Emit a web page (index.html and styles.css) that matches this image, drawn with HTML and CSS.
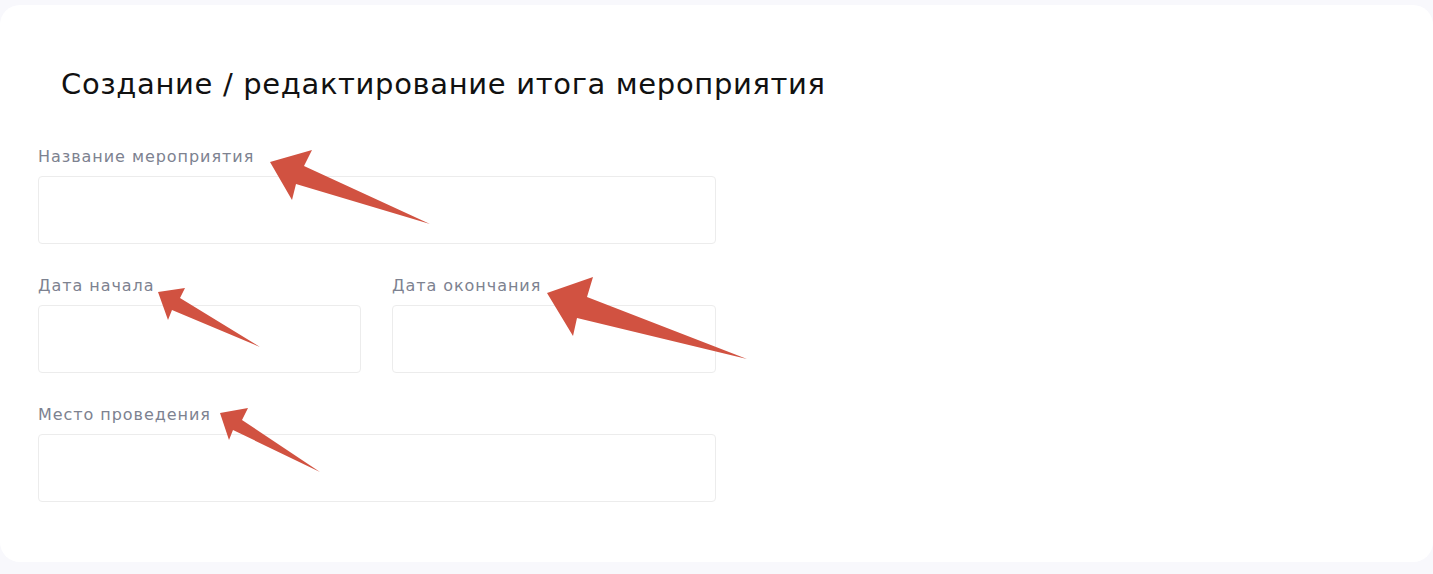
FILE: index.html
```html
<!DOCTYPE html>
<html lang="ru">
<head>
<meta charset="utf-8">
<link rel="stylesheet" href="styles.css">
</head>
<body>
<div class="page">
  <section class="card">
    <h1 class="title">Создание / редактирование итога мероприятия</h1>
    <form class="form">
      <div class="field">
        <label class="label">Название мероприятия</label>
        <div class="input"></div>
      </div>
      <div class="row">
        <div class="field">
          <label class="label">Дата начала</label>
          <div class="input"></div>
        </div>
        <div class="field">
          <label class="label">Дата окончания</label>
          <div class="input"></div>
        </div>
      </div>
      <div class="field">
        <label class="label">Место проведения</label>
        <div class="input"></div>
      </div>
    </form>
    <svg class="arrows" width="1433" height="574" viewBox="0 0 1433 574">
      <polygon points="270,162 312,150 304,166 430,224 296,184 292,200"/>
      <polygon points="158,292 185,288 180,298 260,347 172,310 168,320"/>
      <polygon points="547,293 593,277 587,297 747,359 577,318 573,336"/>
      <polygon points="220,413 248,408 242,420 320,472 233,430 229,440"/>
    </svg>
  </section>
</div>
</body>
</html>
```
FILE: styles.css
```css
html, body {
  margin: 0;
  padding: 0;
  background: #f8f8fc;
}
body {
  font-family: "DejaVu Sans", Inter, sans-serif;
  width: 1433px;
  height: 574px;
  overflow: hidden;
}
.page {
  padding-top: 5px;
}
.card {
  position: relative;
  background: #ffffff;
  border-radius: 20px;
  height: 557px;
  box-sizing: border-box;
  padding: 62px 0 0 38px;
}
.title {
  margin: 0 0 46px 23px;
  font-size: 29px;
  line-height: 34px;
  font-weight: normal;
  letter-spacing: 0.65px;
  color: #111111;
}
.form {
  width: 678px;
  display: flex;
  flex-direction: column;
  gap: 32px;
}
.row {
  display: grid;
  grid-template-columns: 323px 324px;
  column-gap: 31px;
}
.field {
  display: flex;
  flex-direction: column;
}
.label {
  font-size: 16px;
  line-height: 20px;
  letter-spacing: 0.95px;
  color: #7d8290;
  margin-bottom: 9px;
}
.input {
  height: 66px;
  border: 1px solid #ececec;
  border-radius: 4px;
  background: #fff;
}
.arrows {
  position: absolute;
  left: 0;
  top: -5px;
  fill: #d15241;
  pointer-events: none;
}
```
